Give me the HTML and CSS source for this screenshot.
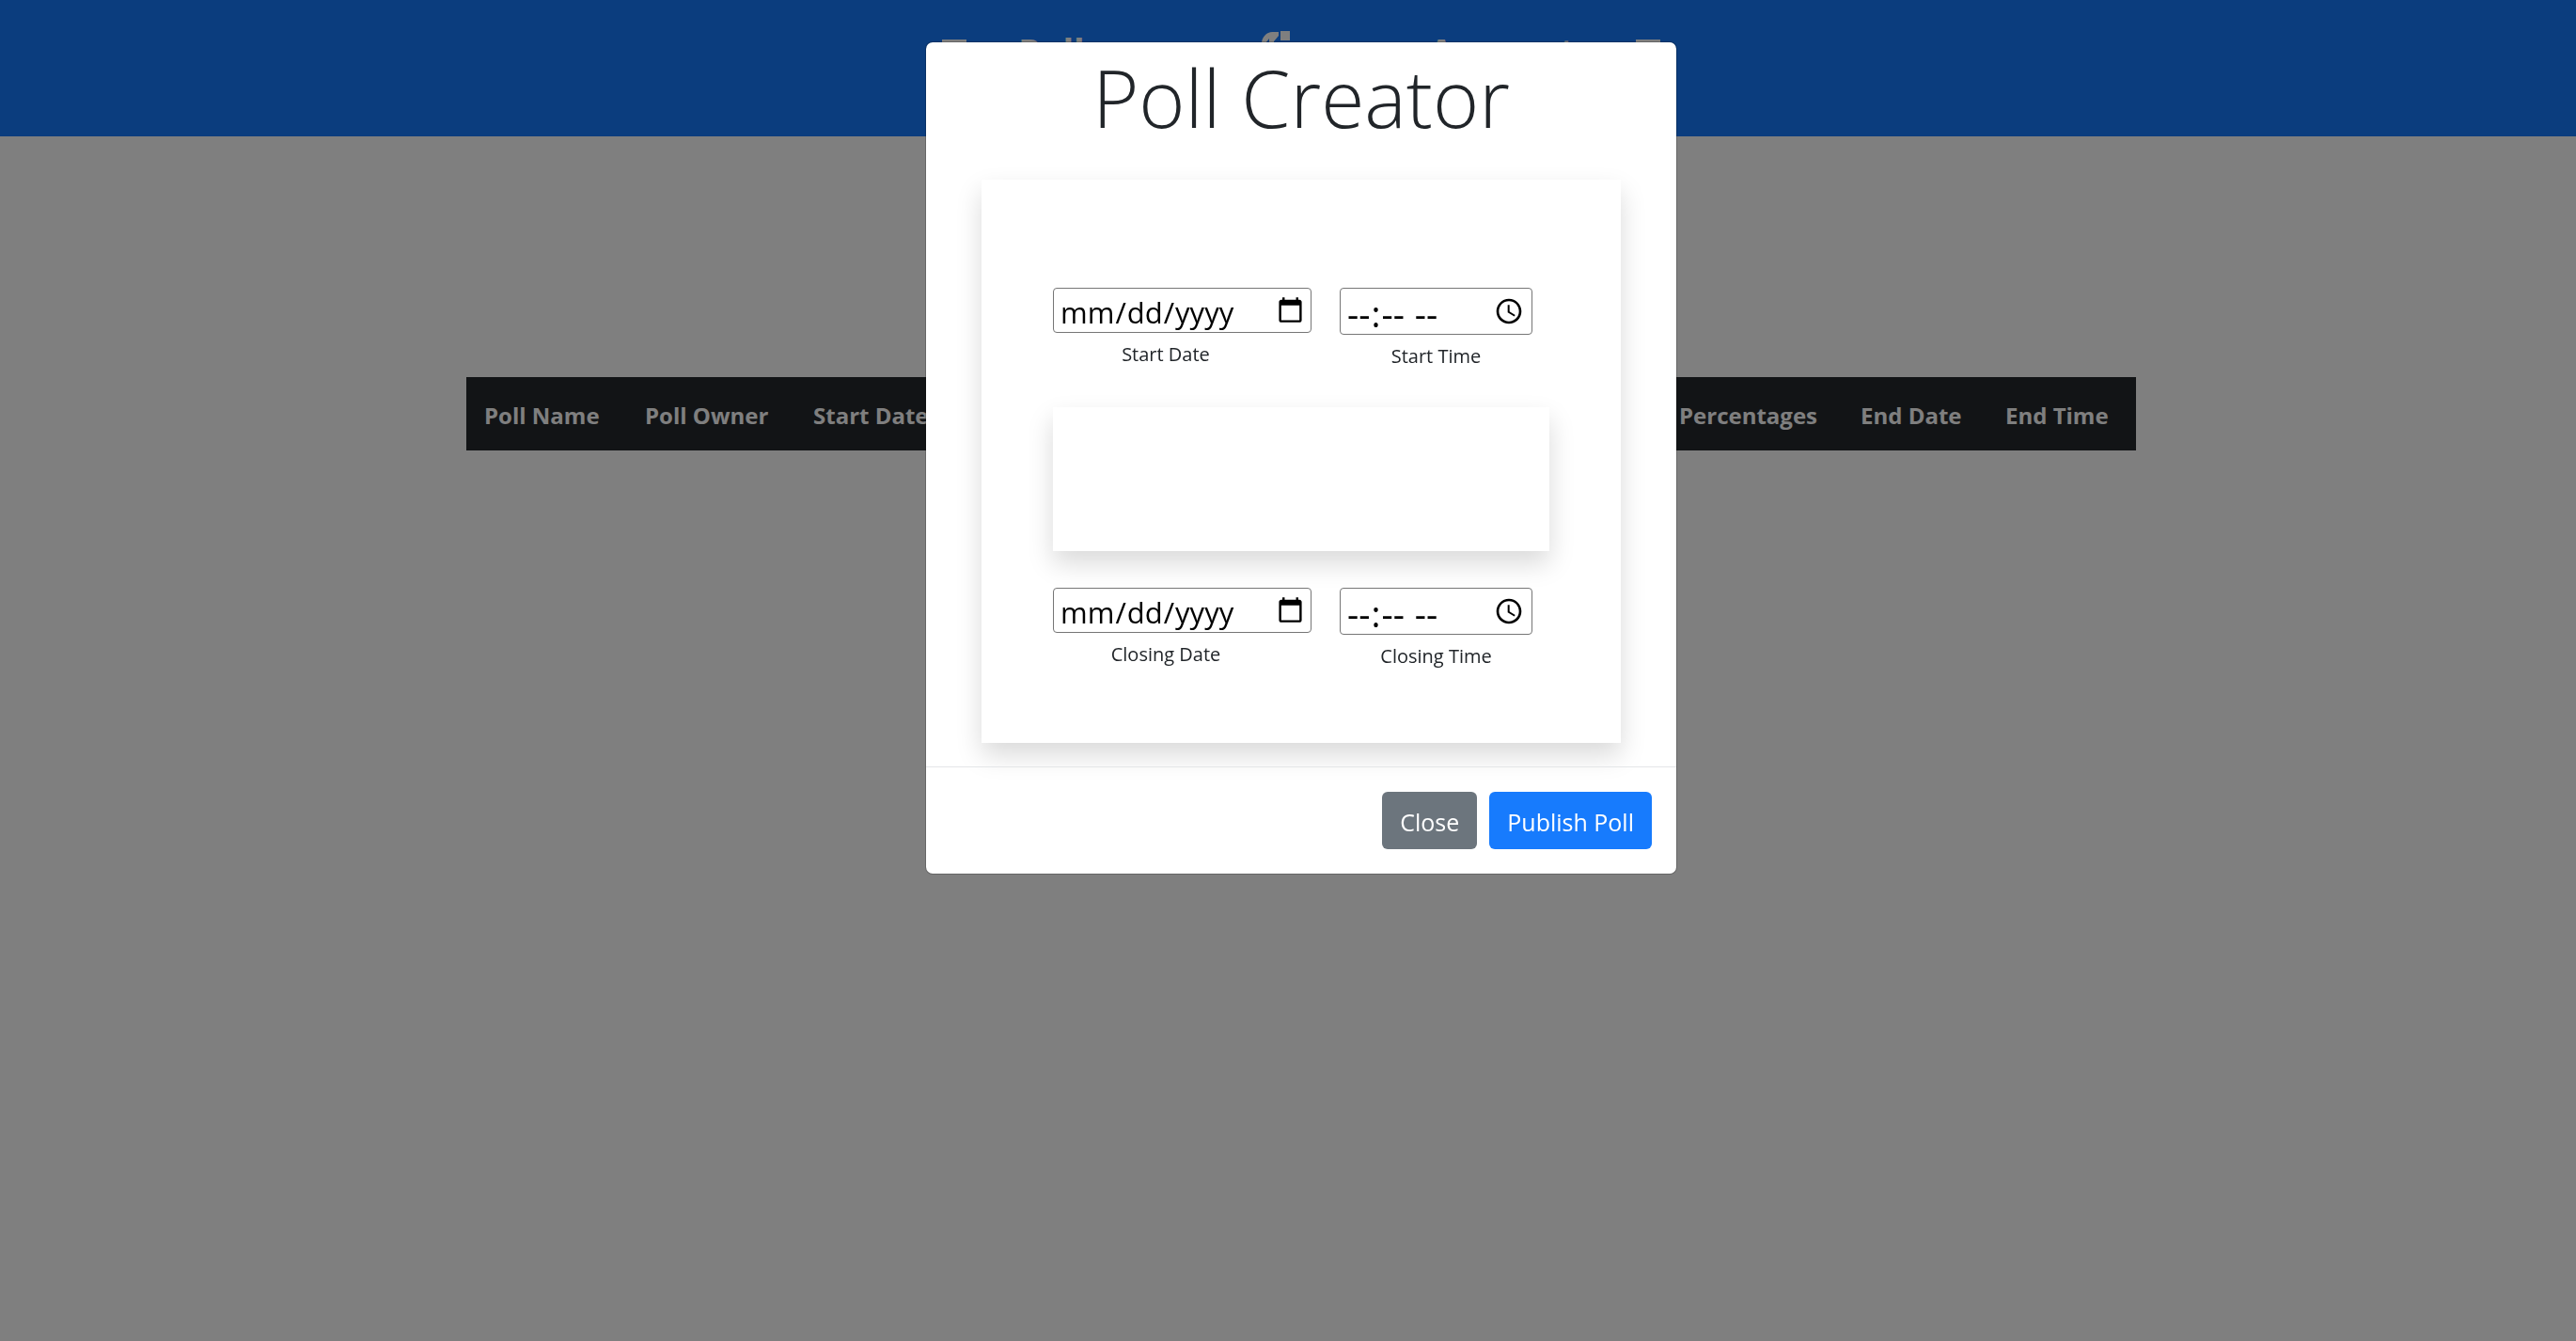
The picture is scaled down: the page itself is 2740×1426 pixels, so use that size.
FILE: index.html
```html
<!DOCTYPE html>
<html lang="en-US">
<head>
<meta charset="utf-8">
<title>Poll Creator</title>
<link rel="stylesheet" href="styles.css">
</head>
<body>
<header class="topbar">
  <nav class="nav" aria-label="Main">
    <svg class="menu-icon" viewBox="0 0 30 30" aria-hidden="true"><path d="M2 2h26v5H2zM2 13h26v5H2zM2 24h26v5H2z"/></svg>
    <a class="nav-link nav-polls" href="#">Polls</a>
    <svg class="logo" viewBox="0 0 32 32" aria-hidden="true"><path d="M21 1h10v10H21zM19 2v4l-5 6v2H9V9L5 14H1C1 7 7 1 14 2zM0 16h31v15H0z"/></svg>
    <a class="nav-link nav-account" href="#">Account</a>
    <svg class="menu-icon" viewBox="0 0 30 30" aria-hidden="true"><path d="M2 2h26v5H2zM2 13h26v5H2zM2 24h26v5H2z"/></svg>
  </nav>
</header>
<main class="page">
  <table class="polls">
    <colgroup><col class="c-name"><col class="c-owner"><col class="c-start"><col><col class="c-percent"><col class="c-date"><col class="c-time"></colgroup>
    <thead>
      <tr><th scope="col">Poll Name</th><th scope="col">Poll Owner</th><th scope="col">Start Date</th><td></td><th scope="col">Percentages</th><th scope="col">End Date</th><th scope="col">End Time</th></tr>
    </thead>
  </table>
</main>
<div class="backdrop">
  <section class="modal" role="dialog" aria-modal="true" aria-labelledby="title">
    <h1 class="title" id="title">Poll Creator</h1>
    <form class="card" id="poll">
      <div class="row">
        <div class="field"><input class="picker date" type="date" id="sd"><label for="sd">Start Date</label></div>
        <div class="field"><input class="picker time" type="time" id="st"><label for="st">Start Time</label></div>
      </div>
      <div class="panel"></div>
      <div class="row">
        <div class="field"><input class="picker date" type="date" id="cd"><label for="cd">Closing Date</label></div>
        <div class="field"><input class="picker time" type="time" id="ct"><label for="ct">Closing Time</label></div>
      </div>
    </form>
    <footer class="actions">
      <button class="btn secondary" type="button">Close</button>
      <button class="btn primary" type="submit" form="poll">Publish Poll</button>
    </footer>
  </section>
</div>
</body>
</html>
```
FILE: styles.css
```css
* { box-sizing: border-box; }
body {
  margin: 0;
  background: #fff;
  color: #212529;
  font-family: "Open Sans", "Noto Sans", sans-serif;
  font-size: 24px;
  line-height: 36px;
}
.topbar {
  height: 145px;
  padding: 32px 0 0 28px;
  background: #177bfd;
}
.nav {
  display: flex;
  align-items: flex-start;
  width: 768px;
  margin: 0 auto;
}
.nav-link {
  color: #fff;
  font-size: 38px;
  font-weight: 700;
  line-height: 44px;
  text-decoration: none;
}
.nav-polls { width: 258px; margin-left: 53px; }
.nav-account { flex: 1; margin-left: 147px; }
.menu-icon { width: 30px; height: 30px; margin-top: 8px; fill: #fff; }
.logo { width: 32px; height: 32px; fill: #fff; }
.page { padding: 256px 0 0 28px; }
.polls {
  width: 1776px;
  max-width: 100%;
  margin: 0 auto;
  border-collapse: collapse;
  table-layout: fixed;
  background: #24282c;
  color: #fff;
}
.polls th, .polls td { padding: 23px 0 19px 19px; text-align: left; white-space: nowrap; }
.c-name { width: 171px; }
.c-owner { width: 179px; }
.c-start { width: 180px; }
.c-percent { width: 193px; }
.c-date { width: 154px; }
.c-time { width: 158px; }
.backdrop {
  position: fixed;
  inset: 0;
  padding: 44px 0 44px 28px;
  overflow: auto;
  background: rgba(0, 0, 0, .5);
}
.modal {
  max-width: 800px;
  margin: 0 auto;
  border: 1px solid rgba(0, 0, 0, .2);
  border-radius: 8px;
  background: #fff;
  background-clip: padding-box;
}
.title {
  margin: 0 0 28px;
  font-size: 84px;
  font-weight: 300;
  line-height: 118px;
  text-align: center;
}
.card {
  margin: 0 59px 25px;
  padding: 115px 76px 69px;
  background: #fff;
  box-shadow: 0 13px 26px rgba(0, 0, 0, .15);
}
.row {
  display: grid;
  grid-template-columns: 240px 205px;
  column-gap: 65px;
}
.field { display: flex; flex-direction: column; align-items: center; }
.field label { font-size: 20px; line-height: 46px; }
.picker {
  height: 48px;
  padding: 3px 4px 0 6px;
  border: 1px solid #767676;
  border-radius: 4px;
  background: #fff;
  color: #000;
  font-family: inherit;
  font-size: 31px;
}
.date { width: 275px; align-self: flex-start; }
.time { width: 205px; height: 50px; }
.time::-webkit-datetime-edit { font-size: 38px; line-height: 42px; }
.time::-webkit-datetime-edit-ampm-field { margin-left: 4px; }
.picker::-webkit-calendar-picker-indicator { margin-bottom: 3px; }
.panel {
  height: 153px;
  margin: 31px 0 39px;
  box-shadow: 0 13px 26px rgba(0, 0, 0, .15);
}
.actions {
  display: flex;
  justify-content: flex-end;
  gap: 13px;
  padding: 26px;
  border-top: 1px solid #e4e6e8;
}
.btn {
  height: 61px;
  padding: 2px 19px 0;
  border: 0;
  border-radius: 6px;
  color: #fff;
  font-family: inherit;
  font-size: 25px;
}
.secondary { background: #6c757d; }
.primary { background: #177bfd; }
```
